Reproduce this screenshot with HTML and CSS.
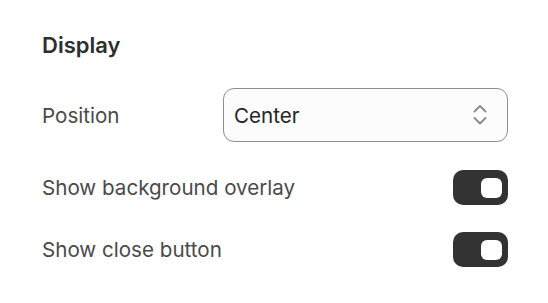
FILE: index.html
```html
<!DOCTYPE html>
<html lang="en">
<head>
    <meta charset="UTF-8">
    <meta name="viewport" content="width=device-width, initial-scale=1.0">
    <title>Display settings</title>
    <link rel="stylesheet" href="styles.css">
</head>
<body>

<div class="panel">
    <h2 class="section-title">Display</h2>

    <div class="setting-row">
        <span class="setting-label">Position</span>
        <div class="select-box">
            <span class="select-value">Center</span>
            <svg class="select-arrows" width="14" height="24" viewBox="0 0 14 24" fill="none" stroke="#8a8a8a" stroke-width="1.8" stroke-linecap="round" stroke-linejoin="round">
                <path d="M1.5 8.5 L7 3 L12.5 8.5"/>
                <path d="M1.5 15 L7 20.5 L12.5 15"/>
            </svg>
        </div>
    </div>

    <div class="setting-row toggle-row">
        <span class="setting-label">Show background overlay</span>
        <span class="toggle on"><span class="knob"></span></span>
    </div>

    <div class="setting-row toggle-row">
        <span class="setting-label">Show close button</span>
        <span class="toggle on"><span class="knob"></span></span>
    </div>
</div>

</body>
</html>
```

FILE: styles.css
```css
body {
    margin: 0;
    padding: 0;
    background-color: #fff;
    font-family: Inter, "Noto Sans", sans-serif;
}

.panel {
    padding: 32px 40px 0 42px;
    display: flex;
    flex-direction: column;
}

.section-title {
    margin: 0 0 30px 0;
    font-size: 22px;
    line-height: 26px;
    font-weight: 600;
    color: #2e2e2e;
}

.setting-row {
    display: flex;
    justify-content: space-between;
    align-items: center;
}

.toggle-row {
    margin-top: 28px;
}

.toggle-row + .toggle-row {
    margin-top: 27px;
}

.setting-label {
    font-size: 20.6px;
    color: #4a4a4a;
}

.select-box {
    width: 285px;
    height: 54px;
    box-sizing: border-box;
    display: flex;
    align-items: center;
    justify-content: space-between;
    padding: 0 20px 0 10px;
    border: 1px solid #8f8f8f;
    border-radius: 11px;
    background-color: #fcfcfc;
}

.select-value {
    font-size: 20.6px;
    color: #262626;
}

.toggle {
    width: 55px;
    height: 35px;
    box-sizing: border-box;
    border-radius: 10px;
    background-color: #333;
    display: flex;
    align-items: center;
    justify-content: flex-end;
    padding-right: 6px;
}

.knob {
    width: 21px;
    height: 20px;
    border-radius: 6px;
    background-color: #fff;
}
```
